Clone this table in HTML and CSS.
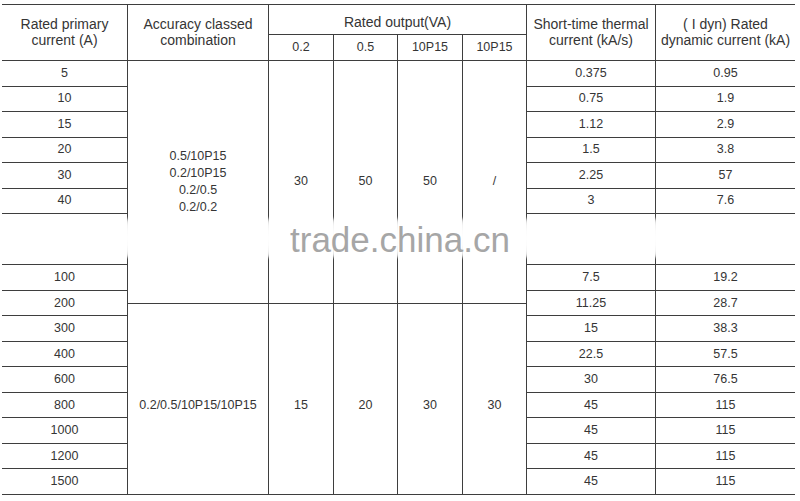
FILE: index.html
```html
<!DOCTYPE html>
<html>
<head>
<meta charset="utf-8">
<link rel="stylesheet" href="styles.css">
</head>
<body>
<div class="page">
  <div class="table">
    <div class="c hd span2">Rated primary<br>current (A)</div>
    <div class="c hd span2">Accuracy classed<br>combination</div>
    <div class="c hd wide">Rated output(VA)</div>
    <div class="c hd span2">Short-time thermal<br>current (kA/s)</div>
    <div class="c hd span2 last">( I dyn) Rated<br>dynamic current (kA)</div>
    <div class="c sub">0.2</div>
    <div class="c sub">0.5</div>
    <div class="c sub">10P15</div>
    <div class="c sub">10P15</div>

    <div class="mid">
      <div class="c lines">0.5/10P15<br>0.2/10P15<br>0.2/0.5<br>0.2/0.2</div>
      <div class="c">30</div>
      <div class="c">50</div>
      <div class="c">50</div>
      <div class="c">/</div>
      <div class="c low">0.2/0.5/10P15/10P15</div>
      <div class="c low">15</div>
      <div class="c low">20</div>
      <div class="c low">30</div>
      <div class="c low">30</div>
    </div>

    <div class="c">5</div><div class="c">0.375</div><div class="c last">0.95</div>
    <div class="c">10</div><div class="c">0.75</div><div class="c last">1.9</div>
    <div class="c">15</div><div class="c">1.12</div><div class="c last">2.9</div>
    <div class="c">20</div><div class="c">1.5</div><div class="c last">3.8</div>
    <div class="c">30</div><div class="c">2.25</div><div class="c last">57</div>
    <div class="c">40</div><div class="c">3</div><div class="c last">7.6</div>
    <div class="c tall"></div><div class="c tall"></div><div class="c tall last"></div>
    <div class="c">100</div><div class="c">7.5</div><div class="c last">19.2</div>
    <div class="c">200</div><div class="c">11.25</div><div class="c last">28.7</div>
    <div class="c">300</div><div class="c">15</div><div class="c last">38.3</div>
    <div class="c">400</div><div class="c">22.5</div><div class="c last">57.5</div>
    <div class="c">600</div><div class="c">30</div><div class="c last">76.5</div>
    <div class="c">800</div><div class="c">45</div><div class="c last">115</div>
    <div class="c">1000</div><div class="c">45</div><div class="c last">115</div>
    <div class="c">1200</div><div class="c">45</div><div class="c last">115</div>
    <div class="c">1500</div><div class="c">45</div><div class="c last">115</div>
  </div>

  <div class="blob b1"></div>
  <div class="blob b2"></div>
  <div class="blob b3"></div>
  <div class="blob b4"></div>
  <div class="blob b5"></div>
  <div class="blob b6"></div>
  <div class="blob b7"></div>
  <div class="watermark">trade.china.cn</div>
</div>
</body>
</html>
```
FILE: styles.css
```css
html, body {
  margin: 0;
  padding: 0;
  background: #ffffff;
}
body {
  width: 800px;
  height: 501px;
  overflow: hidden;
  font-family: "Liberation Sans", Arial, sans-serif;
  color: #353535;
}
.page {
  position: relative;
  padding: 4px 5px 0 2px;
}
.table {
  box-sizing: border-box;
  width: 793px;
  height: 491px;
  border-top: 1px solid #3e3e3e;
  display: grid;
  grid-template-columns: 126px 141px 65px 64px 65px 64px 129px 139px;
  grid-template-rows: 30px 26px repeat(17, 1fr);
}
.c {
  box-sizing: border-box;
  border-right: 1px solid #3e3e3e;
  border-bottom: 1px solid #3e3e3e;
  display: flex;
  align-items: center;
  justify-content: center;
  text-align: center;
  font-size: 12.5px;
  line-height: 17px;
  min-width: 0;
  min-height: 0;
}
.last {
  border-right: none;
}
.hd {
  font-size: 14px;
  line-height: 16px;
  padding-bottom: 1px;
}
.span2 {
  grid-row: span 2;
}
.wide {
  grid-column: span 4;
  padding-top: 6px;
}
.sub {
  font-size: 12.5px;
}
.tall {
  grid-row: span 2;
}
.mid {
  grid-column: 2 / 7;
  grid-row: 3 / -1;
  display: grid;
  grid-template-columns: 141px 65px 64px 65px 64px;
  grid-template-rows: 19fr 15fr;
}
.lines {
  line-height: 17px;
}
.low {
  padding-top: 14px;
}
.blob {
  position: absolute;
  top: 218px;
  width: 7px;
  height: 40px;
  margin-left: -3px;
  background: #ffffff;
  border-radius: 50%;
  filter: blur(1.5px);
}
.b1 { left: 127px; }
.b2 { left: 268px; }
.b3 { left: 333px; }
.b4 { left: 397px; }
.b5 { left: 462px; }
.b6 { left: 526px; }
.b7 { left: 655px; }
.watermark {
  position: absolute;
  left: 290px;
  top: 222px;
  font-size: 35px;
  line-height: 35px;
  color: #a6a6a6;
  white-space: nowrap;
}
```
